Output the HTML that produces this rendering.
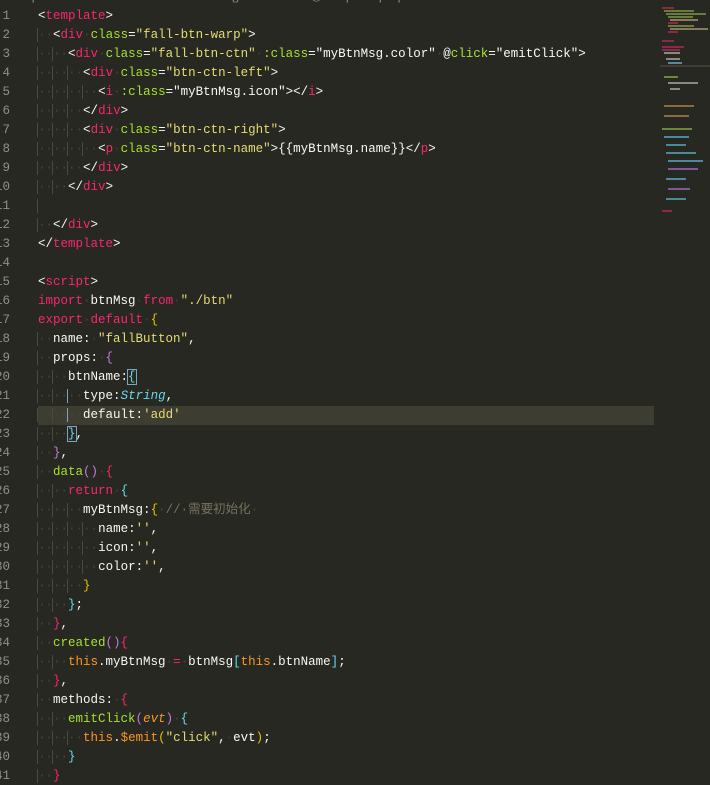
<!DOCTYPE html>
<html><head><meta charset="utf-8">
<style>
html,body{margin:0;padding:0;background:#272822;width:710px;height:785px;overflow:hidden;}
body{position:relative;font-family:"Liberation Mono","Noto Sans CJK SC",monospace;font-size:12.5px;}
.crumb{position:absolute;left:0;top:-12px;color:#8a8a82;white-space:pre;font-family:"Liberation Sans",sans-serif;font-size:13px;}
.ln{position:absolute;left:-21px;width:31px;text-align:right;color:#8f908a;}
.line{position:absolute;left:38px;white-space:pre;color:#f8f8f2;height:19px;line-height:19px;}
.num{position:absolute;height:19px;line-height:19px;}
.hl{position:absolute;left:38px;width:616px;top:406px;height:19px;background:#3e3d32;}
.g{border-left:1px solid #4a4a44;margin-left:-1px;color:#44443e;}
.d{color:#44443e;}
.t{color:#f92672}.a{color:#a6e22e}.s{color:#e6db74}.k{color:#f92672}.c{color:#75715e}
.f{color:#a6e22e}.y{color:#66d9ef;font-style:italic}.o{color:#fd971f}.p{color:#ae81ff}.b{color:#66d9ef}
.yl{color:#e6c200}.pu{color:#c678dd}.it{font-style:italic}
.box{outline:1px solid #7aa6c2;}
.mm{position:absolute;height:2px;}
</style></head><body>
<div class="crumb">/ components / fallbutton / ● fallbutton  / {} fallbutton  / ◉ script / ◌ props / ◌ btnName / ◌ default</div>
<div class="hl"></div>

<div class="ln num" style="top:7px">1</div>
<div class="ln num" style="top:26px">2</div>
<div class="ln num" style="top:45px">3</div>
<div class="ln num" style="top:64px">4</div>
<div class="ln num" style="top:83px">5</div>
<div class="ln num" style="top:102px">6</div>
<div class="ln num" style="top:121px">7</div>
<div class="ln num" style="top:140px">8</div>
<div class="ln num" style="top:159px">9</div>
<div class="ln num" style="top:178px">10</div>
<div class="ln num" style="top:197px">11</div>
<div class="ln num" style="top:216px">12</div>
<div class="ln num" style="top:235px">13</div>
<div class="ln num" style="top:254px">14</div>
<div class="ln num" style="top:273px">15</div>
<div class="ln num" style="top:292px">16</div>
<div class="ln num" style="top:311px">17</div>
<div class="ln num" style="top:330px">18</div>
<div class="ln num" style="top:349px">19</div>
<div class="ln num" style="top:368px">20</div>
<div class="ln num" style="top:387px">21</div>
<div class="ln num" style="top:406px">22</div>
<div class="ln num" style="top:425px">23</div>
<div class="ln num" style="top:444px">24</div>
<div class="ln num" style="top:463px">25</div>
<div class="ln num" style="top:482px">26</div>
<div class="ln num" style="top:501px">27</div>
<div class="ln num" style="top:520px">28</div>
<div class="ln num" style="top:539px">29</div>
<div class="ln num" style="top:558px">30</div>
<div class="ln num" style="top:577px">31</div>
<div class="ln num" style="top:596px">32</div>
<div class="ln num" style="top:615px">33</div>
<div class="ln num" style="top:634px">34</div>
<div class="ln num" style="top:653px">35</div>
<div class="ln num" style="top:672px">36</div>
<div class="ln num" style="top:691px">37</div>
<div class="ln num" style="top:710px">38</div>
<div class="ln num" style="top:729px">39</div>
<div class="ln num" style="top:748px">40</div>
<div class="ln num" style="top:767px">41</div>

<div class="line" style="top:7px">&lt;<span class="t">template</span>&gt;</div>
<div class="line" style="top:26px"><span class="g">··</span>&lt;<span class="t">div</span><span class="d">·</span><span class="a">class</span>=<span class="s">"fall-btn-warp"</span>&gt;</div>
<div class="line" style="top:45px"><span class="g">··</span><span class="g">··</span>&lt;<span class="t">div</span><span class="d">·</span><span class="a">class</span>=<span class="s">"fall-btn-ctn"</span><span class="d">·</span><span class="a">:class</span>="myBtnMsg.color"<span class="d">·</span>@<span class="a">click</span>="emitClick"&gt;</div>
<div class="line" style="top:64px"><span class="g">··</span><span class="g">··</span><span class="g">··</span>&lt;<span class="t">div</span><span class="d">·</span><span class="a">class</span>=<span class="s">"btn-ctn-left"</span>&gt;</div>
<div class="line" style="top:83px"><span class="g">··</span><span class="g">··</span><span class="g">··</span><span class="g">··</span>&lt;<span class="t">i</span><span class="d">·</span><span class="a">:class</span>="myBtnMsg.icon"&gt;&lt;/<span class="t">i</span>&gt;</div>
<div class="line" style="top:102px"><span class="g">··</span><span class="g">··</span><span class="g">··</span>&lt;/<span class="t">div</span>&gt;</div>
<div class="line" style="top:121px"><span class="g">··</span><span class="g">··</span><span class="g">··</span>&lt;<span class="t">div</span><span class="d">·</span><span class="a">class</span>=<span class="s">"btn-ctn-right"</span>&gt;</div>
<div class="line" style="top:140px"><span class="g">··</span><span class="g">··</span><span class="g">··</span><span class="g">··</span>&lt;<span class="t">p</span><span class="d">·</span><span class="a">class</span>=<span class="s">"btn-ctn-name"</span>&gt;{{myBtnMsg.name}}&lt;/<span class="t">p</span>&gt;</div>
<div class="line" style="top:159px"><span class="g">··</span><span class="g">··</span><span class="g">··</span>&lt;/<span class="t">div</span>&gt;</div>
<div class="line" style="top:178px"><span class="g">··</span><span class="g">··</span>&lt;/<span class="t">div</span>&gt;</div>
<div class="line" style="top:197px"><span class="g">&nbsp;</span></div>
<div class="line" style="top:216px"><span class="g">··</span>&lt;/<span class="t">div</span>&gt;</div>
<div class="line" style="top:235px">&lt;/<span class="t">template</span>&gt;</div>

<div class="line" style="top:273px">&lt;<span class="t">script</span>&gt;</div>
<div class="line" style="top:292px"><span class="k">import</span><span class="d">·</span>btnMsg<span class="d">·</span><span class="k">from</span><span class="d">·</span><span class="s">"./btn"</span></div>
<div class="line" style="top:311px"><span class="k">export</span><span class="d">·</span><span class="k">default</span><span class="d">·</span><span class="yl">{</span></div>
<div class="line" style="top:330px"><span class="g">··</span>name:<span class="d">·</span><span class="s">"fallButton"</span>,</div>
<div class="line" style="top:349px"><span class="g">··</span>props:<span class="d">·</span><span class="pu">{</span></div>
<div class="line" style="top:368px"><span class="g">··</span><span class="g">··</span>btnName:<span class="box b">{</span></div>
<div class="line" style="top:387px"><span class="g">··</span><span class="g">··</span><span class="g" style="border-color:#7aa6c2">··</span>type:<span class="y">String</span>,</div>
<div class="line" style="top:406px"><span class="g">··</span><span class="g">··</span><span class="g" style="border-color:#7aa6c2">··</span>default:<span class="s">'add'</span></div>
<div class="line" style="top:425px"><span class="g">··</span><span class="g">··</span><span class="box b">}</span>,</div>
<div class="line" style="top:444px"><span class="g">··</span><span class="pu">}</span>,</div>
<div class="line" style="top:463px"><span class="g">··</span><span class="f">data</span><span class="pu">()</span><span class="d">·</span><span class="t">{</span></div>
<div class="line" style="top:482px"><span class="g">··</span><span class="g">··</span><span class="k">return</span><span class="d">·</span><span class="b">{</span></div>
<div class="line" style="top:501px"><span class="g">··</span><span class="g">··</span><span class="g">··</span>myBtnMsg:<span class="yl">{</span><span class="d">·</span><span class="c">//·需要初始化</span><span class="d">·</span></div>
<div class="line" style="top:520px"><span class="g">··</span><span class="g">··</span><span class="g">··</span><span class="g">··</span>name:<span class="s">''</span>,</div>
<div class="line" style="top:539px"><span class="g">··</span><span class="g">··</span><span class="g">··</span><span class="g">··</span>icon:<span class="s">''</span>,</div>
<div class="line" style="top:558px"><span class="g">··</span><span class="g">··</span><span class="g">··</span><span class="g">··</span>color:<span class="s">''</span>,</div>
<div class="line" style="top:577px"><span class="g">··</span><span class="g">··</span><span class="g">··</span><span class="yl">}</span></div>
<div class="line" style="top:596px"><span class="g">··</span><span class="g">··</span><span class="b">}</span>;</div>
<div class="line" style="top:615px"><span class="g">··</span><span class="t">}</span>,</div>
<div class="line" style="top:634px"><span class="g">··</span><span class="f">created</span><span class="pu">()</span><span class="t">{</span></div>
<div class="line" style="top:653px"><span class="g">··</span><span class="g">··</span><span class="o">this</span>.myBtnMsg<span class="d">·</span><span class="k">=</span><span class="d">·</span>btnMsg<span class="b">[</span><span class="o">this</span>.btnName<span class="b">]</span>;</div>
<div class="line" style="top:672px"><span class="g">··</span><span class="t">}</span>,</div>
<div class="line" style="top:691px"><span class="g">··</span>methods:<span class="d">·</span><span class="t">{</span></div>
<div class="line" style="top:710px"><span class="g">··</span><span class="g">··</span><span class="f">emitClick</span><span class="pu">(</span><span class="o it">evt</span><span class="pu">)</span><span class="d">·</span><span class="b">{</span></div>
<div class="line" style="top:729px"><span class="g">··</span><span class="g">··</span><span class="g">··</span><span class="o">this</span>.<span class="o">$emit</span><span class="yl">(</span><span class="s">"click"</span>,<span class="d">·</span>evt<span class="yl">)</span>;</div>
<div class="line" style="top:748px"><span class="g">··</span><span class="g">··</span><span class="b">}</span></div>
<div class="line" style="top:767px"><span class="g">··</span><span class="t">}</span></div>

<!-- minimap -->
<div class="mm" style="left:662px;top:7px;width:12px;background:#8a2a4a"></div>
<div class="mm" style="left:664px;top:10px;width:30px;background:#6a7a3a"></div>
<div class="mm" style="left:666px;top:13px;width:40px;background:#6a7a3a"></div>
<div class="mm" style="left:668px;top:16px;width:25px;background:#6a7a3a"></div>
<div class="mm" style="left:670px;top:19px;width:28px;background:#8a7a5a"></div>
<div class="mm" style="left:668px;top:22px;width:10px;background:#8a2a4a"></div>
<div class="mm" style="left:668px;top:25px;width:26px;background:#6a7a3a"></div>
<div class="mm" style="left:670px;top:28px;width:38px;background:#8a7a5a"></div>
<div class="mm" style="left:668px;top:31px;width:10px;background:#8a2a4a"></div>
<div class="mm" style="left:662px;top:40px;width:12px;background:#8a2a4a"></div>
<div class="mm" style="left:662px;top:46px;width:22px;background:#8a2a4a"></div>
<div class="mm" style="left:662px;top:49px;width:18px;background:#8a2a4a"></div>
<div class="mm" style="left:664px;top:52px;width:16px;background:#8a8a80"></div>
<div class="mm" style="left:666px;top:58px;width:14px;background:#8a8a80"></div>
<div class="mm" style="left:668px;top:62px;width:14px;background:#5a8a9a"></div>
<div class="mm" style="left:660px;top:65px;width:50px;background:#3e3d32"></div>
<div class="mm" style="left:664px;top:76px;width:14px;background:#6a8a3a"></div>
<div class="mm" style="left:668px;top:82px;width:30px;background:#8a8a80"></div>
<div class="mm" style="left:670px;top:88px;width:10px;background:#8a8a80"></div>
<div class="mm" style="left:664px;top:105px;width:30px;background:#8a6a3a"></div>
<div class="mm" style="left:664px;top:115px;width:25px;background:#8a6a3a"></div>
<div class="mm" style="left:662px;top:128px;width:30px;background:#6a8a3a"></div>
<div class="mm" style="left:664px;top:136px;width:25px;background:#4a8a9a"></div>
<div class="mm" style="left:666px;top:144px;width:20px;background:#4a8a9a"></div>
<div class="mm" style="left:666px;top:152px;width:30px;background:#4a8a9a"></div>
<div class="mm" style="left:668px;top:160px;width:35px;background:#4a8a9a"></div>
<div class="mm" style="left:668px;top:168px;width:30px;background:#7a5a9a"></div>
<div class="mm" style="left:666px;top:178px;width:20px;background:#4a8a9a"></div>
<div class="mm" style="left:668px;top:188px;width:22px;background:#7a5a9a"></div>
<div class="mm" style="left:666px;top:198px;width:20px;background:#4a8a9a"></div>
<div class="mm" style="left:662px;top:210px;width:10px;background:#8a2a4a"></div>
</body></html>
